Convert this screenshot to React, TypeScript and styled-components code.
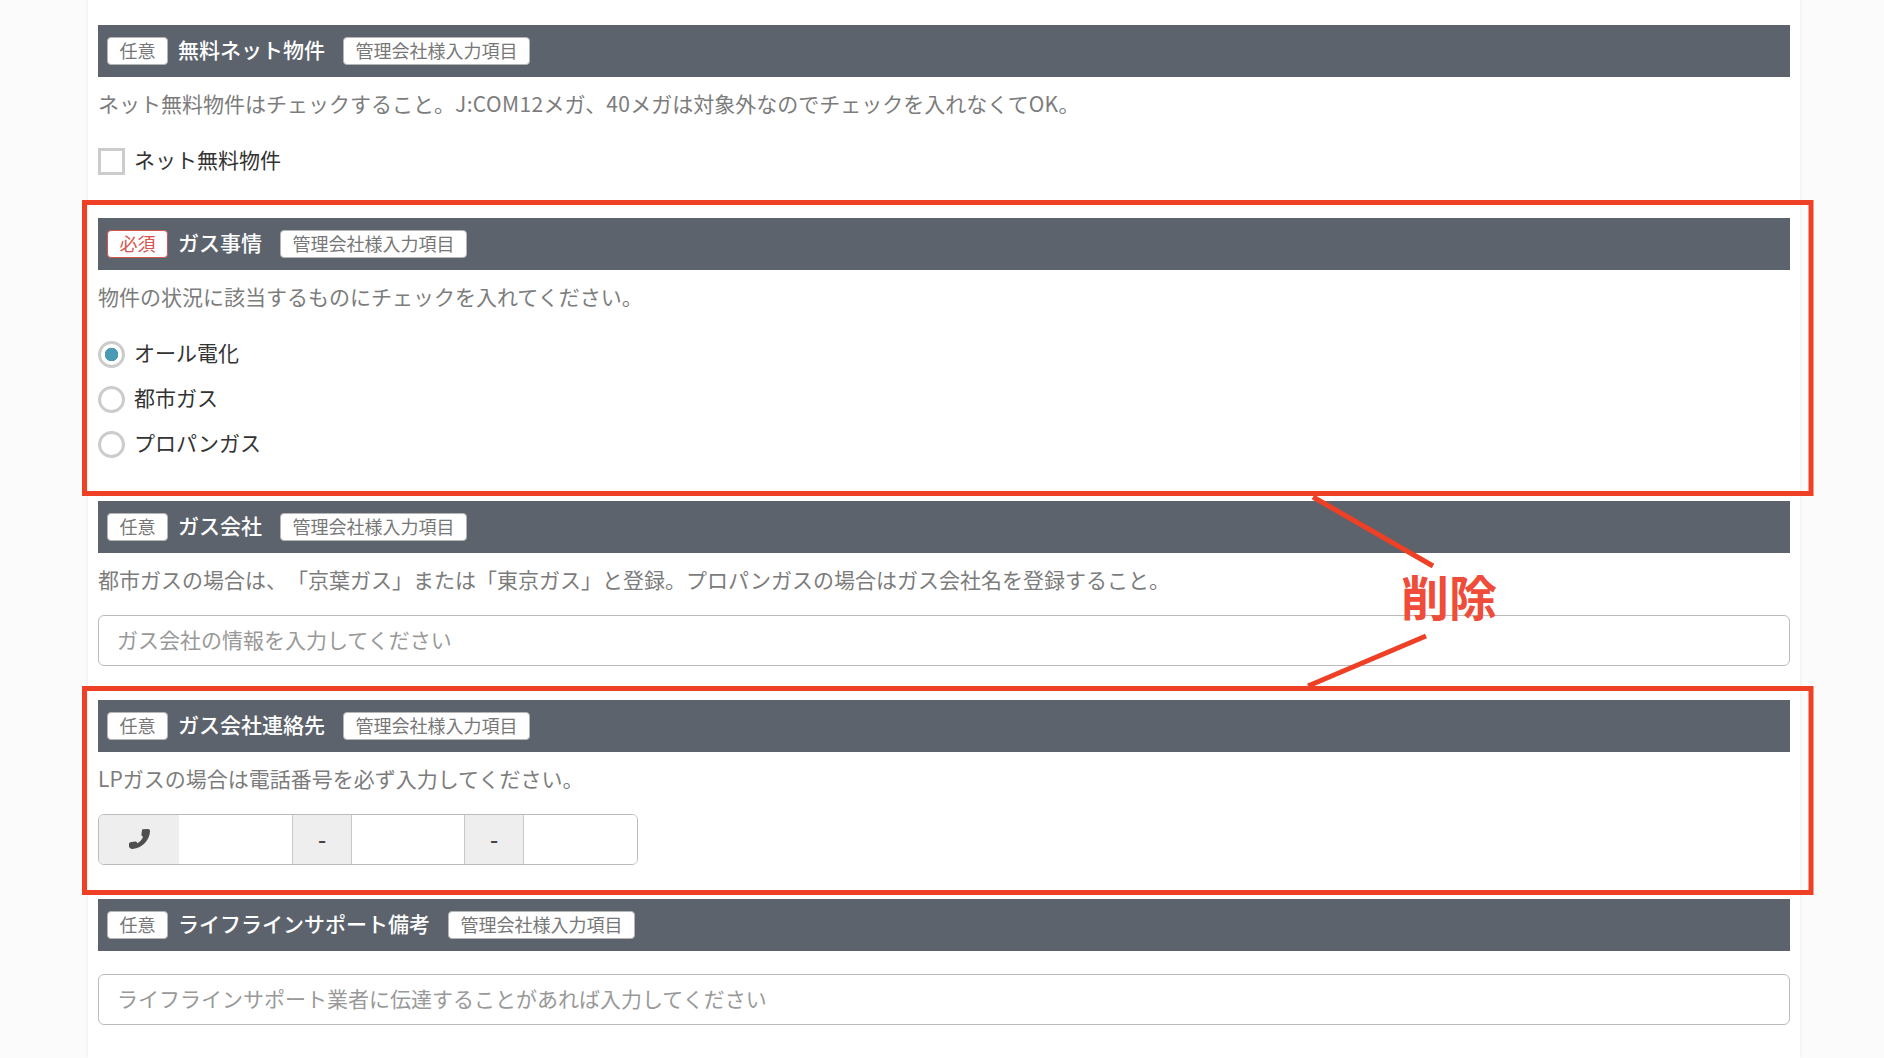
import React from "react";
import styled, { createGlobalStyle } from "styled-components";

const Global = createGlobalStyle`
  html, body { margin: 0; padding: 0; background: #fbfbfb; height: 1058px; overflow: hidden; }
  body { font-family: "Noto Sans CJK JP", "Noto Sans", sans-serif; color: #333; text-spacing-trim: space-all; }
`;

const Page = styled.div`
  position: relative;
  height: 1058px;
  overflow: hidden;
  padding: 0 84px 0 88px;
  box-sizing: border-box;
`;
const Panel = styled.main`
  background: #fff;
  box-shadow: 0 0 4px rgba(0, 0, 0, 0.08);
  height: 100%;
  padding: 25px 10px 0;
  box-sizing: border-box;
`;
const Section = styled.section<{ $after: number }>`
  margin-bottom: ${(p) => p.$after}px;
`;
const Bar = styled.header`
  display: flex;
  align-items: center;
  height: 52px;
  background: #5c636d;
  padding: 0 9px;
  gap: 10px;
`;
const Badge = styled.span<{ $required?: boolean }>`
  display: inline-flex;
  align-items: center;
  justify-content: center;
  height: 28px;
  box-sizing: border-box;
  padding: 0 11.5px 2px;
  background: #fff;
  border: 1px solid ${(p) => (p.$required ? "#d9534f" : "#b5b5b5")};
  border-radius: 4px;
  font-size: 18px;
  line-height: 1;
  color: ${(p) => (p.$required ? "#d9534f" : "#777")};
`;
const Title = styled.h3`
  margin: -4px 8px 0 0;
  font-size: 21px;
  line-height: 1;
  font-weight: 500;
  color: #fff;
`;
const Help = styled.p`
  margin: 11px 0 0;
  font-size: 21px;
  line-height: 30px;
  color: #7c7c7c;
`;
const Latin = styled.span`
  letter-spacing: 0.4px;
`;
const Options = styled.div<{ $top: number }>`
  display: flex;
  flex-direction: column;
  gap: 18px;
  margin-top: ${(p) => p.$top}px;
`;
const Option = styled.label`
  display: flex;
  align-items: flex-start;
  gap: 9px;
  height: 27px;
  font-size: 21px;
  line-height: 23px;
  color: #333;
`;
const Check = styled.span`
  width: 27px;
  height: 27px;
  box-sizing: border-box;
  border: 3px solid #ccc;
  background: #fff;
`;
const Radio = styled.span<{ $on?: boolean }>`
  width: 27px;
  height: 27px;
  box-sizing: border-box;
  border: 3px solid #ccc;
  border-radius: 50%;
  background: ${(p) => (p.$on ? "radial-gradient(circle, #4a9ab5 6.5px, #fff 7px)" : "#fff")};
`;
const TextInput = styled.div<{ $top: number }>`
  display: flex;
  align-items: center;
  height: 51px;
  box-sizing: border-box;
  margin-top: ${(p) => p.$top}px;
  padding: 0 18px 4px;
  border: 1px solid #bbb;
  border-radius: 6px;
  background: #fff;
  font-size: 21px;
  color: #999;
`;
const PhoneGroup = styled.div`
  display: flex;
  width: 540px;
  height: 51px;
  box-sizing: border-box;
  margin-top: 21px;
  border: 1px solid #bbb;
  border-radius: 6px;
  overflow: hidden;
`;
const Addon = styled.span<{ $w: number; $ruled?: boolean }>`
  display: flex;
  align-items: center;
  justify-content: center;
  width: ${(p) => p.$w}px;
  background: #eee;
  color: #444;
  font-size: 23px;
  font-weight: 500;
  line-height: 1;
  padding-bottom: 2px;
  box-sizing: border-box;
  ${(p) => (p.$ruled ? "border-left: 1px solid #c8c8c8; border-right: 1px solid #c8c8c8;" : "")}
`;
const PhoneCell = styled.span<{ $w: number }>`
  width: ${(p) => p.$w}px;
  background: #fff;
`;
const PhoneIcon = styled.svg`
  width: 21px;
  height: 20px;
  fill: #4f4f4f;
`;
const Overlay = styled.svg`
  position: absolute;
  inset: 0;
  width: 1884px;
  height: 1058px;
  pointer-events: none;
`;
const Note = styled.div`
  position: absolute;
  left: 1401px;
  top: 561px;
  font-size: 48px;
  line-height: 68px;
  font-weight: 700;
  color: #ef4d3a;
  white-space: nowrap;
`;

const Head = ({ req, title }: { req?: boolean; title: string }) => (
  <Bar>
    <Badge $required={req}>{req ? "必須" : "任意"}</Badge>
    <Title>{title}</Title>
    <Badge>管理会社様入力項目</Badge>
  </Bar>
);

export default function App() {
  return (
    <Page>
      <Global />
      <Panel>
        <Section $after={43}>
          <Head title="無料ネット物件" />
          <Help>ネット無料物件はチェックすること。<Latin>J:COM12</Latin>メガ、<Latin>40</Latin>メガは対象外なのでチェックを入れなくて<Latin>OK</Latin>。</Help>
          <Options $top={30}>
            <Option><Check />ネット無料物件</Option>
          </Options>
        </Section>
        <Section $after={43}>
          <Head req title="ガス事情" />
          <Help>物件の状況に該当するものにチェックを入れてください。</Help>
          <Options $top={30}>
            <Option><Radio $on />オール電化</Option>
            <Option><Radio />都市ガス</Option>
            <Option><Radio />プロパンガス</Option>
          </Options>
        </Section>
        <Section $after={34}>
          <Head title="ガス会社" />
          <Help>都市ガスの場合は、「京葉ガス」または「東京ガス」と登録。プロパンガスの場合はガス会社名を登録すること。</Help>
          <TextInput $top={21}>ガス会社の情報を入力してください</TextInput>
        </Section>
        <Section $after={34}>
          <Head title="ガス会社連絡先" />
          <Help>LPガスの場合は電話番号を必ず入力してください。</Help>
          <PhoneGroup>
            <Addon $w={80}>
              <PhoneIcon viewBox="0 0 21 20">
                <path d="M13.5 0.3 19 0C20.3 0 21 0.8 21 2 21 10 14 19 3.5 20 1.5 20 0.3 19 0 17.5L0 15C0 14 0.6 13.5 1.5 13.3L6 12.5C7 12.4 7.5 12.8 8 13.5L8.5 14.3C11 13 13 10.5 14 8L13 7C12.5 6.5 12.3 6 12.5 5L13 1.2C13 0.7 13.2 0.4 13.5 0.3Z" />
              </PhoneIcon>
            </Addon>
            <PhoneCell $w={113} />
            <Addon $w={60} $ruled>-</Addon>
            <PhoneCell $w={112} />
            <Addon $w={60} $ruled>-</Addon>
            <PhoneCell $w={113} />
          </PhoneGroup>
        </Section>
        <Section $after={0}>
          <Head title="ライフラインサポート備考" />
          <TextInput $top={23}>ライフラインサポート業者に伝達することがあれば入力してください</TextInput>
        </Section>
      </Panel>
      <Overlay viewBox="0 0 1884 1058">
        <g fill="none" stroke="#ee4025" strokeWidth="5">
          <rect x="84.5" y="202.5" width="1726.5" height="291" />
          <rect x="84.5" y="688.5" width="1726.5" height="204" />
          <path d="M1313 497L1433 566" />
          <path d="M1426 636L1308 686" />
        </g>
      </Overlay>
      <Note>削除</Note>
    </Page>
  );
}
